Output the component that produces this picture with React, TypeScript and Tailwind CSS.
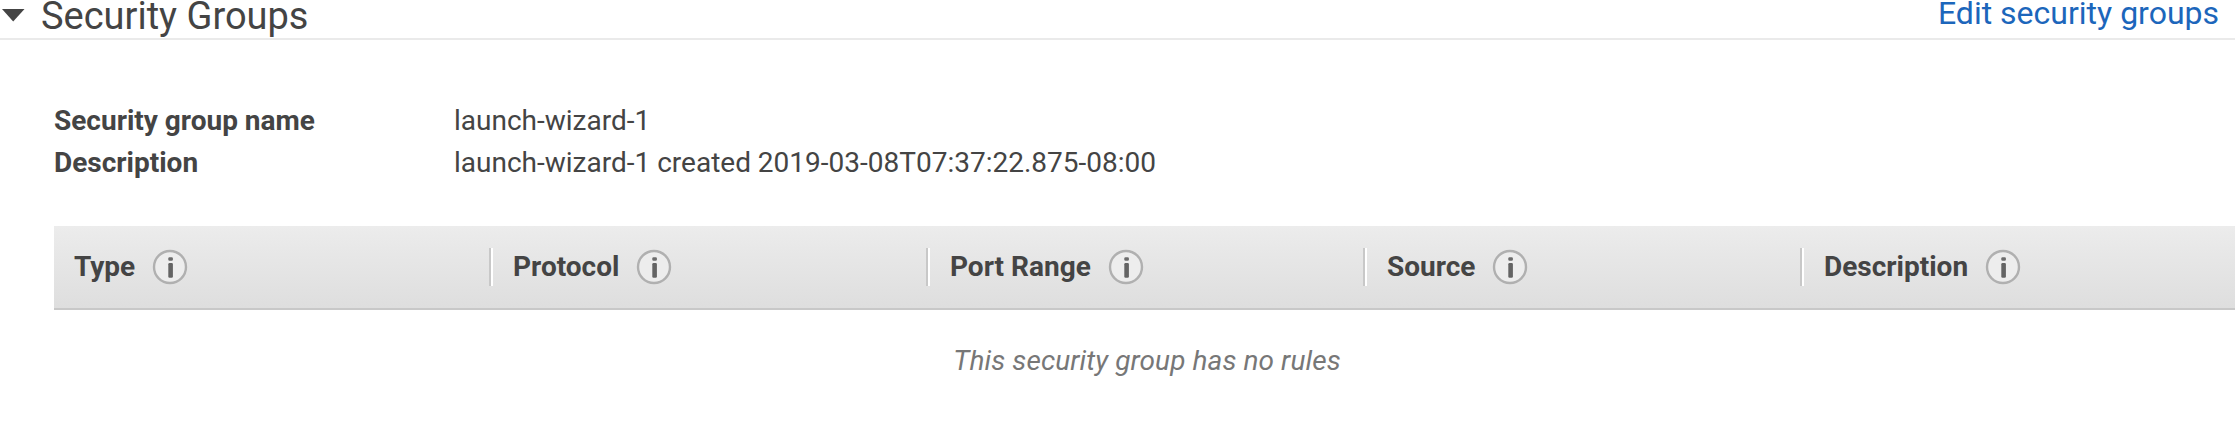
const InfoIcon = () => (
  <svg width="36" height="36" viewBox="0 0 36 36" className="shrink-0" aria-hidden="true">
    <circle cx="18" cy="18" r="16" fill="#ededed" stroke="#b0b0b0" strokeWidth="2.4" />
    <rect x="16.3" y="8.2" width="4.6" height="3.6" rx="1.2" fill="#6c6c6c" />
    <rect x="16.3" y="14" width="4.6" height="14.8" rx="1.2" fill="#646464" />
  </svg>
);

const columns = ["Type", "Protocol", "Port Range", "Source", "Description"];

const details = [
  { label: "Security group name", value: "launch-wizard-1" },
  { label: "Description", value: "launch-wizard-1 created 2019-03-08T07:37:22.875-08:00" },
];

export default function App() {
  return (
    <main className="h-[428px] w-full overflow-hidden bg-white font-['Roboto',sans-serif] text-[28px] text-[#444]">
      <header className="flex h-10 items-start justify-between border-b-2 border-[#eaeaea] pr-4">
        <div className="flex items-start">
          <svg width="26" height="30" viewBox="0 0 26 30" className="mr-[15px] shrink-0" aria-hidden="true">
            <path d="M2 9H24.5L13.2 21.5Z" fill="#444" />
          </svg>
          <h2 className="text-[38px] leading-8">Security Groups</h2>
        </div>
        <a href="#" className="text-[32px] leading-[26px] text-[#1c66bb]">
          Edit security groups
        </a>
      </header>

      <dl className="mt-[60px] ml-[54px]">
        {details.map((d) => (
          <div key={d.label} className="flex h-[42px] items-center leading-[42px]">
            <dt className="w-[400px] font-bold">{d.label}</dt>
            <dd className="whitespace-nowrap">{d.value}</dd>
          </div>
        ))}
      </dl>

      <section className="mt-[42px] ml-[54px]">
        <div className="flex h-[84px] items-center border-b-2 border-[#c8c8c8] bg-linear-to-b from-[#ececec] to-[#dedede]">
          {columns.map((name) => (
            <div
              key={name}
              className="flex h-[38px] w-[437px] shrink-0 items-center gap-[17px] border-r-2 border-l-2 border-r-[#c8c8c8] border-l-white pl-5 first:border-l-transparent first:pl-[18px] last:w-auto last:grow last:border-r-0"
            >
              <span className="font-bold leading-[38px]">{name}</span>
              <InfoIcon />
            </div>
          ))}
        </div>
        <p className="pt-[30px] pl-[5px] text-center leading-[42px] tracking-[0.09px] text-[#777] italic">
          This security group has no rules
        </p>
      </section>
    </main>
  );
}
